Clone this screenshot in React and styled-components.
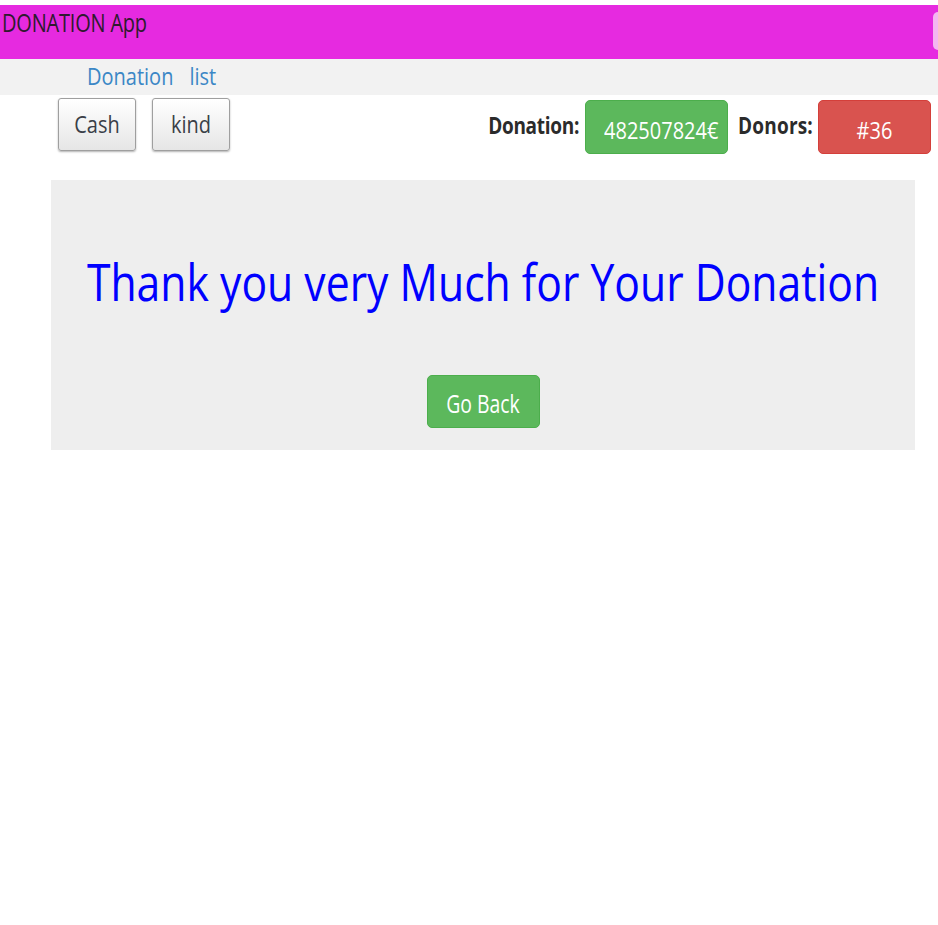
import React from "react";
import styled, { createGlobalStyle } from "styled-components";

const GlobalStyle = createGlobalStyle`
  body {
    margin: 0;
    background: #ffffff;
    font-family: "Open Sans", "DejaVu Sans", sans-serif;
  }
`;

// the page looks stretched vertically, so text is scaled on Y
const Stretch = styled.span`
  display: inline-block;
  transform: scaleY(${(p) => p.$k || 1.2});
  transform-origin: center;
`;

const Page = styled.div`
  padding-top: 5px;
`;

const Navbar = styled.div`
  height: 54px;
  box-sizing: border-box;
  background: #e62ae0;
  display: flex;
  align-items: flex-start;
  justify-content: space-between;
  padding: 8px 0 0 2px;
  overflow: hidden;
`;

const Brand = styled.div`
  font-size: 20px;
  line-height: 20px;
  color: #2e1a2e;
  letter-spacing: -0.2px;
`;

const Toggle = styled.div`
  width: 40px;
  height: 38px;
  margin-top: -1px;
  margin-right: -35px;
  border-radius: 5px;
  background: #f4b6f1;
`;

const SubNav = styled.div`
  height: 36px;
  background: #f2f2f2;
  display: flex;
  align-items: center;
  gap: 16px;
  padding-left: 87px;
`;

const NavLink = styled.a`
  font-size: 20px;
  line-height: 20px;
  color: #3b87c6;
  text-decoration: none;
  cursor: pointer;
`;

const Toolbar = styled.div`
  display: flex;
  justify-content: space-between;
  align-items: flex-start;
  padding: 0 7px 0 58px;
`;

const Group = styled.div`
  display: flex;
  align-items: flex-start;
`;

const TypeButton = styled.button`
  width: 78px;
  height: 53px;
  margin-top: 3px;
  margin-right: 16px;
  padding: 0;
  box-sizing: border-box;
  border: 1px solid #9f9f9f;
  border-radius: 3px;
  background: linear-gradient(#ffffff, #e6e6e6);
  box-shadow: 0 1px 2px rgba(0, 0, 0, 0.3);
  font-family: inherit;
  font-size: 20px;
  line-height: 20px;
  color: #3a3f48;
  display: flex;
  align-items: center;
  justify-content: center;
`;

const Label = styled.div`
  margin-top: 21px;
  margin-left: ${(p) => p.$gap}px;
  font-size: 19px;
  line-height: 19px;
  font-weight: 700;
  color: #2b2b2b;
  letter-spacing: ${(p) => p.$ls}px;
`;

const Badge = styled.div`
  width: ${(p) => p.$w}px;
  height: 54px;
  margin-top: 5px;
  margin-left: ${(p) => p.$gap}px;
  box-sizing: border-box;
  padding-top: 8px;
  border-radius: 5px;
  background: ${(p) => p.$bg};
  border: 1px solid ${(p) => p.$border};
  color: #ffffff;
  font-size: 20px;
  line-height: 20px;
  display: flex;
  align-items: center;
  justify-content: ${(p) => p.$justify || "center"};
  padding-left: ${(p) => p.$pl || 0}px;
`;

const Jumbotron = styled.div`
  margin: 26px 23px 0 51px;
  height: 270px;
  box-sizing: border-box;
  padding-top: 80px;
  background: #eeeeee;
  display: flex;
  flex-direction: column;
  align-items: center;
`;

const Heading = styled.h1`
  margin: 0;
  font-size: 42.7px;
  line-height: 43px;
  font-weight: 400;
  color: #0000ff;
  white-space: nowrap;
  transform: scaleY(1.21);
`;

const GoBack = styled.button`
  margin-top: 72px;
  width: 113px;
  height: 53px;
  box-sizing: border-box;
  padding: 4px 0 0;
  border: 1px solid #4cae4c;
  border-radius: 5px;
  background: #5cb85c;
  color: #ffffff;
  font-family: inherit;
  font-size: 19.4px;
  line-height: 20px;
  display: flex;
  align-items: center;
  justify-content: center;
`;

export default function App() {
  return (
    <Page>
      <GlobalStyle />
      <Navbar>
        <Brand>
          <Stretch $k={1.26}>DONATION App</Stretch>
        </Brand>
        <Toggle />
      </Navbar>
      <SubNav>
        <NavLink>
          <Stretch $k={1.2}>Donation</Stretch>
        </NavLink>
        <NavLink>
          <Stretch $k={1.2}>list</Stretch>
        </NavLink>
      </SubNav>
      <Toolbar>
        <Group>
          <TypeButton>
            <Stretch $k={1.19}>Cash</Stretch>
          </TypeButton>
          <TypeButton>
            <Stretch $k={1.19}>kind</Stretch>
          </TypeButton>
        </Group>
        <Group>
          <Label $gap={0} $ls={-0.3}>
            <Stretch $k={1.25}>Donation:</Stretch>
          </Label>
          <Badge $w={143} $gap={6} $bg="#5cb85c" $border="#4cae4c" $justify="flex-start" $pl={18}>
            <Stretch $k={1.19}>482507824€</Stretch>
          </Badge>
          <Label $gap={10} $ls={0.2}>
            <Stretch $k={1.25}>Donors:</Stretch>
          </Label>
          <Badge $w={113} $gap={5} $bg="#d9534f" $border="#d43f3a">
            <Stretch $k={1.19}>#36</Stretch>
          </Badge>
        </Group>
      </Toolbar>
      <Jumbotron>
        <Heading>Thank you very Much for Your Donation</Heading>
        <GoBack>
          <Stretch $k={1.3}>Go Back</Stretch>
        </GoBack>
      </Jumbotron>
    </Page>
  );
}
